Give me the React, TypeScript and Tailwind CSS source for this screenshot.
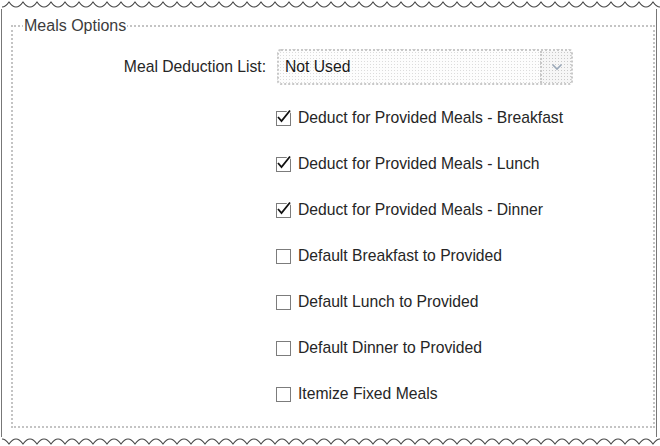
import React from "react";

function Wave({ flip = false }: { flip?: boolean }) {
  const segs: string[] = [];
  for (let x = 2; x < 656; x += 14) {
    segs.push(`Q ${x + 3.5} 7 ${x + 7} 2 Q ${x + 10.5} 7 ${x + 14} 7`);
  }
  const d = `M2 7 ${segs.join(" ")}`;
  return (
    <svg width="660" height="9" className="block" style={{ transform: flip ? "scaleY(-1)" : undefined }}>
      <path d={d} fill="none" stroke="#444" strokeWidth="1.1" />
    </svg>
  );
}

function Box({ checked }: { checked: boolean }) {
  return (
    <span className="relative w-[15px] h-[15px] shrink-0 border-[1.5px] border-solid border-[#7c7c7c] bg-white">
      {checked && (
        <svg width="17" height="17" viewBox="0 0 17 17" className="absolute -left-[2px] -top-[4px]">
          <path d="M3 9 L6.5 13 L15 2.5" fill="none" stroke="#fff" strokeWidth="3.6" />
          <path d="M3 9 L6.5 13 L15 2.5" fill="none" stroke="#111" strokeWidth="1.8" />
        </svg>
      )}
    </span>
  );
}

const rows: [string, boolean][] = [
  ["Deduct for Provided Meals - Breakfast", true],
  ["Deduct for Provided Meals - Lunch", true],
  ["Deduct for Provided Meals - Dinner", true],
  ["Default Breakfast to Provided", false],
  ["Default Lunch to Provided", false],
  ["Default Dinner to Provided", false],
  ["Itemize Fixed Meals", false],
];

export default function App() {
  return (
    <div
      className="w-[660px] h-[446px] bg-white overflow-hidden text-[#262626]"
      style={{ fontFamily: '"Liberation Sans", Arial, sans-serif' }}
    >
      <Wave />
      <div className="ml-[1px] w-[656px] h-[428px] border-l border-r border-[#777] pt-[8px] pl-[9px] pr-[1px]">
        <fieldset className="w-[644px] h-[411px] border-2 border-dotted border-[#c4c4c4] pt-[14px] pb-0 m-0">
          <legend className="ml-[10px] px-[1px] text-[16px] leading-[18px] text-[#3c3c3c]">Meals Options</legend>
          <div className="flex items-center h-[36px]">
            <span className="w-[254px] text-right text-[15.7px] pr-[1px]">Meal Deduction List:</span>
            <div className="ml-[10px] w-[296px] h-[36px] flex rounded-[4px] border-2 border-dotted border-[#c8c8c8] bg-[#fdfdfd] bg-[radial-gradient(circle,#dcdcdc_0.7px,transparent_0.8px)] bg-size-[3px_3px]">
              <span className="flex-1 flex items-center pl-[6px] text-[15.7px] text-[#1a1a1a]">Not Used</span>
              <span className="w-[31px] flex items-center justify-center border-l-2 border-dotted border-[#c8c8c8] bg-[#f6f6f6] bg-[radial-gradient(circle,#c9c9c9_0.7px,transparent_0.8px)] bg-size-[3px_3px]">
                <svg width="12" height="8" viewBox="0 0 12 8">
                  <path d="M1.5 1.5 L6 6 L10.5 1.5" fill="none" stroke="#9aa8b8" strokeWidth="1.6" />
                </svg>
              </span>
            </div>
          </div>
          <div className="mt-[10px] pl-[263px]">
            {rows.map(([label, checked]) => (
              <div key={label} className="h-[46px] flex items-center gap-[7px]">
                <Box checked={checked} />
                <span className="text-[15.7px] leading-[18px]">{label}</span>
              </div>
            ))}
          </div>
        </fieldset>
      </div>
      <Wave flip />
    </div>
  );
}
